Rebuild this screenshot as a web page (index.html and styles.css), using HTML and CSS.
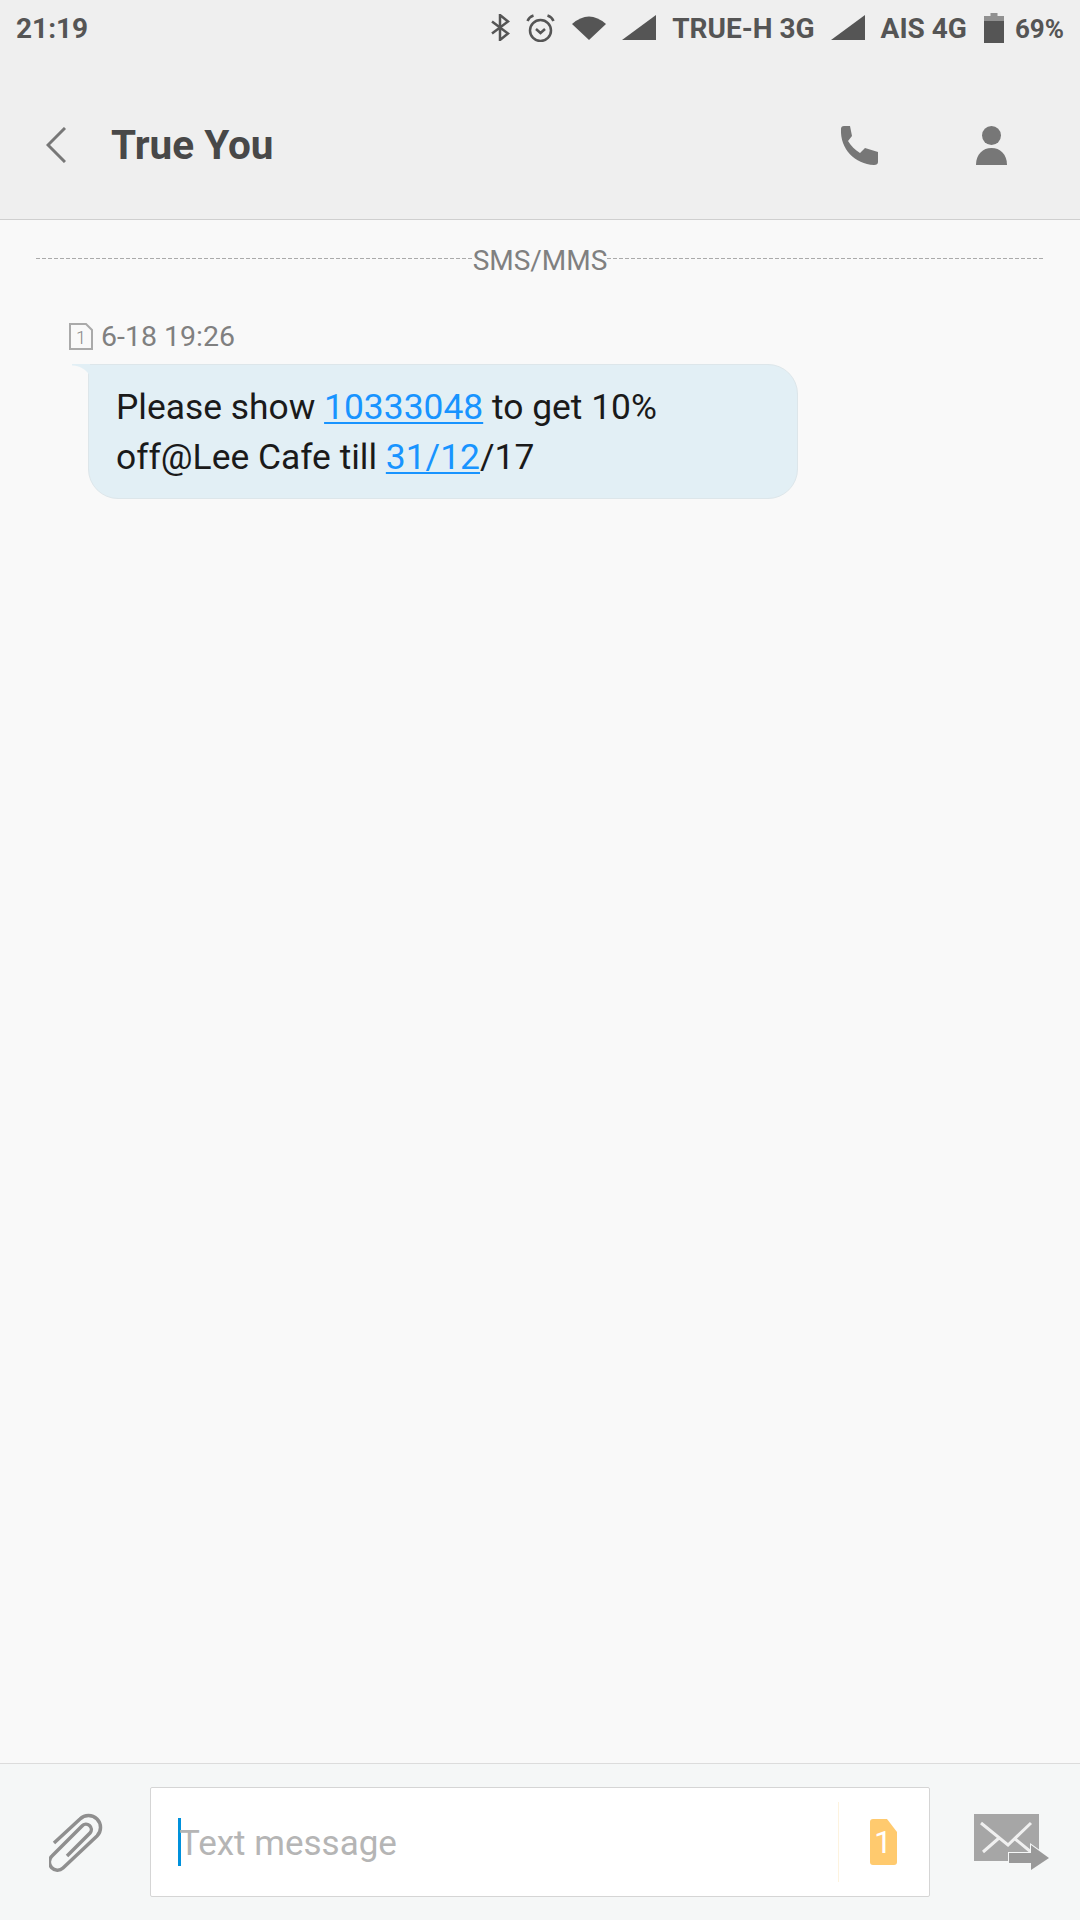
FILE: index.html
```html
<!DOCTYPE html>
<html lang="en">
<head>
    <meta charset="UTF-8">
    <meta name="viewport" content="width=device-width, initial-scale=1.0">
    <title>True You</title>
    <link rel="stylesheet" href="styles.css">
</head>
<body>
    <div class="top">
        <div class="statusbar">
            <span class="clock">21:19</span>
            <div class="status-right">
                <svg class="ic-bt" viewBox="0 0 20 27"><path d="M2 7.500 L18 19.500 L10 26 V1 L18 7.500 L2 19.500"/></svg>
                <svg class="ic-alarm" viewBox="0 0 29 28"><circle cx="14.500" cy="16.500" r="10.500"/><path d="M10 15 L14.500 19 L19 15"/><path d="M1.500 7 Q3 3 7.500 1.500"/><path d="M27.500 7 Q26 3 21.500 1.500"/></svg>
                <svg class="ic-wifi" viewBox="0 0 34 25"><path d="M0 9 Q17 -6 34 9 L17 25 Z"/></svg>
                <svg class="ic-signal" viewBox="0 0 34 25"><path d="M0 25 H34 V0 Z"/></svg>
                <span>TRUE-H 3G</span>
                <svg class="ic-signal" viewBox="0 0 34 25"><path d="M0 25 H34 V0 Z"/></svg>
                <span>AIS 4G</span>
                <svg class="ic-battery" viewBox="0 0 20 30"><path class="bat-empty" d="M6.500 0 H13.500 V3 H20 V8 H0 V3 H6.500 Z"/><path d="M0 8 H20 V30 H0 Z"/></svg>
                <span class="pct">69%</span>
            </div>
        </div>
        <div class="toolbar">
            <svg class="ic-back" viewBox="0 0 20 36"><path d="M19 1 L2 18 L19 35"/></svg>
            <h1 class="title">True You</h1>
            <svg class="ic-phone" viewBox="0 0 38 39"><path d="M1 3 Q1 0 4 0 H10 L12 10 L8 15 C11 20 15 24 20 27 L25 22 L38 26 V36 Q38 39 34 39 C15 38 0 23 1 3 Z"/></svg>
            <svg class="ic-person" viewBox="0 0 31 39"><circle cx="15.500" cy="9.500" r="9.500"/><path d="M0 39 C0 28 7 22 15.500 22 C24 22 31 28 31 39 Z"/></svg>
        </div>
    </div>

    <div class="content">
        <div class="divider"><span>SMS/MMS</span></div>
        <div class="msg-date">
            <svg class="ic-sim" viewBox="0 0 24 27"><path d="M1 1 H17 L23 7 V26 H1 Z"/><text x="12" y="21" text-anchor="middle">1</text></svg>
            <span>6-18 19:26</span>
        </div>
        <div class="bubble">
            Please show <a href="#">10333048</a> to get 10%<br>
            off@Lee Cafe till <a href="#">31/12</a>/17
        </div>
    </div>

    <div class="footer">
        <svg class="ic-clip" viewBox="0 0 54 60"><path d="M5 31 L31 7 A12 12 0 0 1 48 24 L14 56 A8 8 0 0 1 3 44 L33 14 A5 5 0 0 1 41 21 L18 44"/></svg>
        <div class="input-box">
            <div class="input-text"><span class="caret"></span><span class="hint">Text message</span></div>
            <div class="sim-switch">
                <svg class="ic-sim-on" viewBox="0 0 27 46"><path d="M3 0 H17 L27 13 V43 Q27 46 24 46 H3 Q0 46 0 43 V3 Q0 0 3 0 Z"/><text x="13" y="34" text-anchor="middle">1</text></svg>
            </div>
        </div>
        <svg class="ic-send" viewBox="0 0 76 56"><path class="env" d="M0 0 H65 V47 H0 Z"/><path class="flap" d="M7 9 L34 31 L57 9 M9 38 L25 24 M40 24 L57 38"/><path class="arrow" d="M35 39 H57 V31 L75 44 L57 56 V49 H35 Z"/></svg>
    </div>
</body>
</html>
```

FILE: styles.css
```css
* {
  margin: 0;
  padding: 0;
  box-sizing: border-box;
}
body {
  width: 1080px;
  height: 1920px;
  display: flex;
  flex-direction: column;
  font-family: Roboto, Arial, sans-serif;
  background-color: #f9f9f9;
  overflow: hidden;
}
svg {
  display: block;
  flex: none;
}

/* top area */
.top {
  height: 220px;
  background-color: #efefef;
  border-bottom: 1px solid #cfcfcf;
}
.statusbar {
  height: 57px;
  display: flex;
  justify-content: space-between;
  align-items: center;
  padding: 0 16px;
  color: #555;
  font-size: 28px;
  font-weight: 700;
}
.status-right {
  display: flex;
  align-items: center;
  gap: 16px;
}
.status-right svg {
  margin-top: -2px;
  fill: #555;
}
.ic-bt {
  width: 20px;
  height: 27px;
  fill: none !important;
  stroke: #555;
  stroke-width: 2.5;
}
.ic-alarm {
  width: 29px;
  height: 28px;
  fill: none !important;
  stroke: #555;
  stroke-width: 2.5;
}
.ic-wifi {
  width: 34px;
  height: 25px;
  margin-left: 1px;
}
.ic-signal {
  width: 34px;
  height: 25px;
}
.ic-battery {
  width: 20px;
  height: 30px;
  margin-left: 1px;
}
.bat-empty {
  fill: #909090;
}
.pct {
  margin-left: -5px;
  font-size: 26px;
}

.toolbar {
  height: 162px;
  display: flex;
  align-items: center;
  padding-top: 14px;
  padding-left: 46px;
  padding-right: 73px;
}
.ic-back {
  width: 20px;
  height: 36px;
  fill: none;
  stroke: #777;
  stroke-width: 3;
}
.title {
  flex: 1;
  margin-left: 45px;
  font-size: 40.500px;
  font-weight: 700;
  color: #484848;
}
.ic-phone {
  width: 38px;
  height: 39px;
  fill: #777;
}
.ic-person {
  width: 31px;
  height: 39px;
  margin-left: 98px;
  fill: #777;
}

/* message list */
.content {
  flex: 1;
  padding: 24px 36px 0;
}
.divider {
  display: flex;
  align-items: center;
  color: #808080;
  font-size: 28px;
}
.divider::before,
.divider::after {
  content: "";
  flex: 1;
  height: 1px;
  margin-top: -5px;
  background: repeating-linear-gradient(90deg, #aaa 0 4px, transparent 4px 6px);
}
.msg-date {
  display: flex;
  align-items: center;
  gap: 8px;
  margin-top: 43px;
  margin-left: 33px;
  color: #808080;
  font-size: 28.500px;
}
.ic-sim {
  width: 24px;
  height: 27px;
  fill: none;
  stroke: #aaa;
  stroke-width: 2;
}
.ic-sim text {
  font-size: 18px;
  font-weight: 300;
  fill: #888;
  stroke: none;
}
.bubble {
  position: relative;
  width: 710px;
  height: 135px;
  margin-top: 11px;
  margin-left: 52px;
  padding: 17px 27px 0;
  background-color: #e2eff5;
  border: 1px solid #dde6ea;
  border-radius: 0 30px 30px 30px;
  color: #1a1a1a;
  font-size: 35.400px;
  line-height: 50px;
}
.bubble::before {
  content: "";
  position: absolute;
  top: -1px;
  left: -17px;
  width: 18px;
  height: 22px;
  background: radial-gradient(circle at 0 100%, transparent 20px, #e2eff5 21px);
}
.bubble a {
  color: #1894ff;
  text-decoration: underline;
  text-decoration-thickness: 2px;
  text-underline-offset: 3px;
}

/* footer */
.footer {
  height: 157px;
  display: flex;
  align-items: center;
  padding-left: 49px;
  background-color: #f5f7f7;
  border-top: 1px solid #dcdcdc;
}
.ic-clip {
  width: 54px;
  height: 60px;
  fill: none;
  stroke: #8f8f8f;
  stroke-width: 3.500;
}
.input-box {
  width: 780px;
  height: 110px;
  margin-left: 47px;
  display: flex;
  align-items: center;
  background-color: #fff;
  border: 1px solid #d5d5d5;
  border-radius: 2px;
}
.input-text {
  flex: 1;
  display: flex;
  align-items: center;
  padding-left: 27px;
  color: #b5b5b5;
  font-size: 35px;
}
.caret {
  width: 3px;
  height: 48px;
  margin-right: -2px;
  background-color: #0091dc;
}
.hint {
  margin-top: 2px;
}
.sim-switch {
  width: 91px;
  height: 80px;
  display: flex;
  align-items: center;
  padding-left: 31px;
  border-left: 1px solid #fdf3df;
}
.ic-sim-on {
  width: 27px;
  height: 46px;
  fill: #ffca6e;
}
.ic-sim-on text {
  font-size: 32px;
  font-weight: 400;
  fill: #fff;
}
.ic-send {
  width: 76px;
  height: 56px;
  margin-left: 44px;
  overflow: visible;
}
.env {
  fill: #a6a6a6;
}
.flap {
  fill: none;
  stroke: #f0f0f0;
  stroke-width: 3;
}
.arrow {
  fill: #999;
  stroke: #f5f7f7;
  stroke-width: 2;
  paint-order: stroke;
}
```
